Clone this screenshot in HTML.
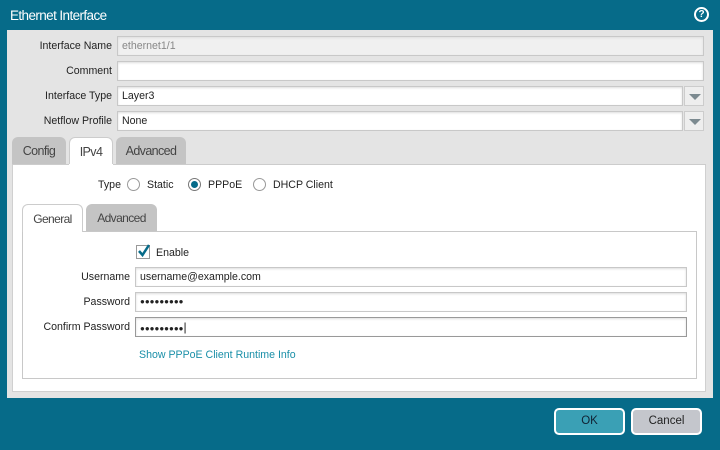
<!DOCTYPE html>
<html><head><style>
*{box-sizing:border-box;margin:0;padding:0}
body{width:720px;height:450px;background:#066b89;font-family:"Liberation Sans",sans-serif;font-size:10.6px;color:#222;position:relative;overflow:hidden}
.abs{position:absolute}
.title{left:10px;top:8px;color:#fff;font-size:13.5px;letter-spacing:-0.6px}
.help{left:694px;top:7px;width:15px;height:15px;border:2px solid #fff;border-radius:50%;color:#fff;font-size:10px;font-weight:bold;text-align:center;line-height:11px}
.panel{left:7px;top:30px;width:706px;height:368px;background:#e4e4e4}
.lbl{text-align:right;width:112px;left:0}
.inp{background:#fff;border:1px solid #c8c8c8;height:20px;padding-left:4px;line-height:18px;box-shadow:inset 0 1px 2px #ddd}
.dd{width:20px;height:20px;background:#eee;border:1px solid #ccc}
.dd:after{content:"";position:absolute;left:4px;top:7px;border-left:6px solid transparent;border-right:6px solid transparent;border-top:6px solid #7c8a90}
.tab{height:28px;border-radius:6px 6px 0 0;background:#c4c4c4;font-size:12.5px;color:#444;text-align:center;line-height:28px;letter-spacing:-0.6px}
.tab.on{background:#fff;border:1px solid #ccc;border-bottom:none}
.radio{width:13px;height:13px;border:1px solid #999;border-radius:50%;background:#fff}
.btn{height:27px;border:2px solid #fff;border-radius:5px;text-align:center;line-height:23px;font-size:11.5px}
</style></head><body>
<div class="abs title">Ethernet Interface</div>
<div class="abs help">?</div>
<div class="abs panel"></div>

<div class="abs lbl" style="top:40px">Interface Name</div>
<div class="abs inp" style="left:117px;top:36px;width:587px;background:#f0f0f0;color:#888">ethernet1/1</div>
<div class="abs lbl" style="top:65px">Comment</div>
<div class="abs inp" style="left:117px;top:61px;width:587px"></div>
<div class="abs lbl" style="top:90px">Interface Type</div>
<div class="abs inp" style="left:117px;top:86px;width:566px">Layer3</div>
<div class="abs dd" style="left:684px;top:86px"></div>
<div class="abs lbl" style="top:115px">Netflow Profile</div>
<div class="abs inp" style="left:117px;top:111px;width:566px">None</div>
<div class="abs dd" style="left:684px;top:111px"></div>

<div class="abs tab" style="left:12px;top:137px;width:54px">Config</div>
<div class="abs tab on" style="left:69px;top:137px;width:44px;height:28px">IPv4</div>
<div class="abs tab" style="left:116px;top:137px;width:70px">Advanced</div>
<div class="abs" style="left:12px;top:164px;width:694px;height:228px;background:#fff;border:1px solid #d0d0d0;border-top:none"></div>
<div class="abs" style="left:113px;top:164px;width:593px;height:1px;background:#ccc"></div>
<div class="abs" style="left:12px;top:164px;width:57px;height:1px;background:#ccc"></div>

<div class="abs" style="left:98px;top:179px">Type</div>
<div class="abs radio" style="left:127px;top:178px"></div>
<div class="abs" style="left:147px;top:179px">Static</div>
<div class="abs radio" style="left:188px;top:178px;border-color:#777"><div style="width:7px;height:7px;border-radius:50%;background:#066b89;margin:2px"></div></div>
<div class="abs" style="left:208px;top:179px">PPPoE</div>
<div class="abs radio" style="left:253px;top:178px"></div>
<div class="abs" style="left:273px;top:179px">DHCP Client</div>

<div class="abs" style="left:22px;top:231px;width:675px;height:148px;border:1px solid #c8c8c8"></div>
<div class="abs tab on" style="left:22px;top:204px;width:61px;height:28px;font-size:12px">General</div>
<div class="abs tab" style="left:86px;top:204px;width:71px;height:27px;font-size:12px">Advanced</div>

<div class="abs" style="left:136px;top:245px;width:14px;height:14px;border:1px solid #999;background:#fff"><svg width="14" height="14" style="position:absolute;left:0;top:-2px"><path d="M2 7 L5.5 11 L12 1" fill="none" stroke="#066b89" stroke-width="2.5"/></svg></div>
<div class="abs" style="left:156px;top:247px">Enable</div>

<div class="abs" style="left:0;width:130px;text-align:right;top:271px">Username</div>
<div class="abs inp" style="left:135px;top:267px;width:552px">username@example.com</div>
<div class="abs" style="left:0;width:130px;text-align:right;top:296px">Password</div>
<div class="abs inp" style="left:135px;top:292px;width:552px;font-size:8px;font-weight:bold">●●●●●●●●●</div>
<div class="abs" style="left:0;width:130px;text-align:right;top:321px">Confirm Password</div>
<div class="abs inp" style="left:135px;top:317px;width:552px;border-color:#999;font-size:8px;font-weight:bold">●●●●●●●●●<span style="font-weight:normal;font-size:12px">|</span></div>
<div class="abs" style="left:139px;top:349px;color:#1a8fa8">Show PPPoE Client Runtime Info</div>

<div class="abs btn" style="left:554px;top:408px;width:71px;background:#3aa0b5;color:#123">OK</div>
<div class="abs btn" style="left:631px;top:408px;width:71px;background:#c4c6cc;color:#222">Cancel</div>
</body></html>
